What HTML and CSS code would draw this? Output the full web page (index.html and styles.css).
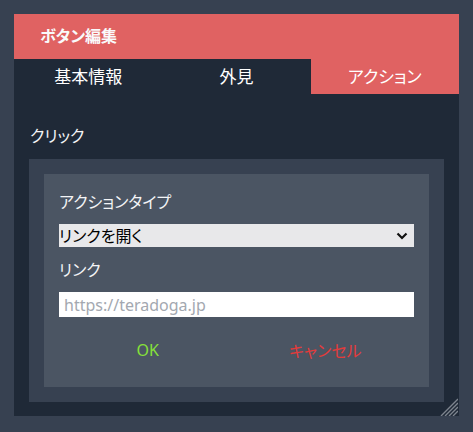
FILE: index.html
```html
<!DOCTYPE html>
<html lang="ja">
<head>
    <meta charset="UTF-8">
    <meta name="viewport" content="width=device-width, initial-scale=1.0">
    <title>ボタン編集</title>
    <link rel="stylesheet" href="styles.css">
</head>
<body>
    <div class="dialog">
        <div class="dialog-header">ボタン編集</div>
        <div class="tabs">
            <div class="tab">基本情報</div>
            <div class="tab">外見</div>
            <div class="tab active">アクション</div>
        </div>
        <div class="dialog-body">
            <div class="section-title">クリック</div>
            <div class="outer-box">
                <div class="inner-box">
                    <label class="field-label" for="action-type">アクションタイプ</label>
                    <div class="select-wrap">
                        <select id="action-type" class="select">
                            <option>リンクを開く</option>
                        </select>
                        <svg class="chevron" width="12" height="8" viewBox="0 0 12 8">
                            <path d="M1.5 1.5 L6 6 L10.5 1.5" fill="none" stroke="#111" stroke-width="2.2"/>
                        </svg>
                    </div>
                    <label class="field-label" for="link">リンク</label>
                    <input type="text" id="link" class="text-input" placeholder="https://teradoga.jp">
                    <div class="actions">
                        <button class="btn btn-ok">OK</button>
                        <button class="btn btn-cancel">キャンセル</button>
                    </div>
                </div>
            </div>
        </div>
        <!-- resize grip -->
        <svg class="grip" width="18" height="19" viewBox="0 0 18 19">
            <path d="M18 2 L1 19 M18 6 L5 19 M18 10 L9 19 M18 14 L13 19" stroke="#7d848e" stroke-width="1.4"/>
        </svg>
    </div>
</body>
</html>
```

FILE: styles.css
```css
body {
    margin: 0;
    padding: 14px;
    background-color: #374151;
    font-family: "Noto Sans", "Noto Sans CJK JP", sans-serif;
    font-size: 16px;
    font-feature-settings: "palt";
    color: #f3f4f6;
}
.dialog {
    position: relative;
    width: 445px;
    background-color: #1f2937;
}
.dialog-header {
    height: 45px;
    line-height: 45px;
    padding-left: 26px;
    background-color: #e06262;
    font-weight: bold;
    color: #f9fafb;
}
.tabs {
    display: flex;
    height: 35px;
}
.tab {
    flex: 1;
    text-align: center;
    line-height: 35px;
    font-size: 17px;
    color: #ffffff;
}
.tab.active {
    background-color: #e06262;
}
.dialog-body {
    padding: 30px 15px 14px;
}
.section-title {
    line-height: 24px;
    margin-bottom: 11px;
    padding-left: 1px;
}
.outer-box {
    background-color: #374151;
    padding: 15px;
}
.inner-box {
    background-color: #4b5563;
    padding: 16px 15px 24px;
}
.field-label {
    display: block;
    line-height: 24px;
    color: #f3f4f6;
}
.select-wrap {
    position: relative;
    margin: 10px 0 11px;
}
.select {
    display: block;
    width: 100%;
    height: 23px;
    margin: 0;
    padding: 0;
    border: none;
    border-radius: 0;
    background-color: #e8e8ea;
    color: #000;
    font-family: inherit;
    font-size: 16px;
    font-feature-settings: "palt";
    -webkit-appearance: none;
    appearance: none;
    outline: none;
}
.chevron {
    position: absolute;
    right: 6px;
    top: 8px;
    pointer-events: none;
}
.text-input {
    display: block;
    width: 100%;
    height: 25px;
    margin-top: 10px;
    padding: 0 5px;
    border: none;
    border-radius: 0;
    box-sizing: border-box;
    background-color: #ffffff;
    font-family: inherit;
    font-size: 16px;
    outline: none;
}
.text-input::placeholder {
    color: #a3a8b0;
}
.actions {
    display: flex;
    margin-top: 20px;
}
.btn {
    flex: 1;
    height: 26px;
    padding: 0;
    border: none;
    background: none;
    font-family: inherit;
    font-size: 16px;
    font-feature-settings: "palt";
    cursor: pointer;
}
.btn-ok {
    color: #86e03a;
}
.btn-cancel {
    color: #e33b3b;
}
.grip {
    position: absolute;
    right: 1px;
    bottom: 0;
}
```
